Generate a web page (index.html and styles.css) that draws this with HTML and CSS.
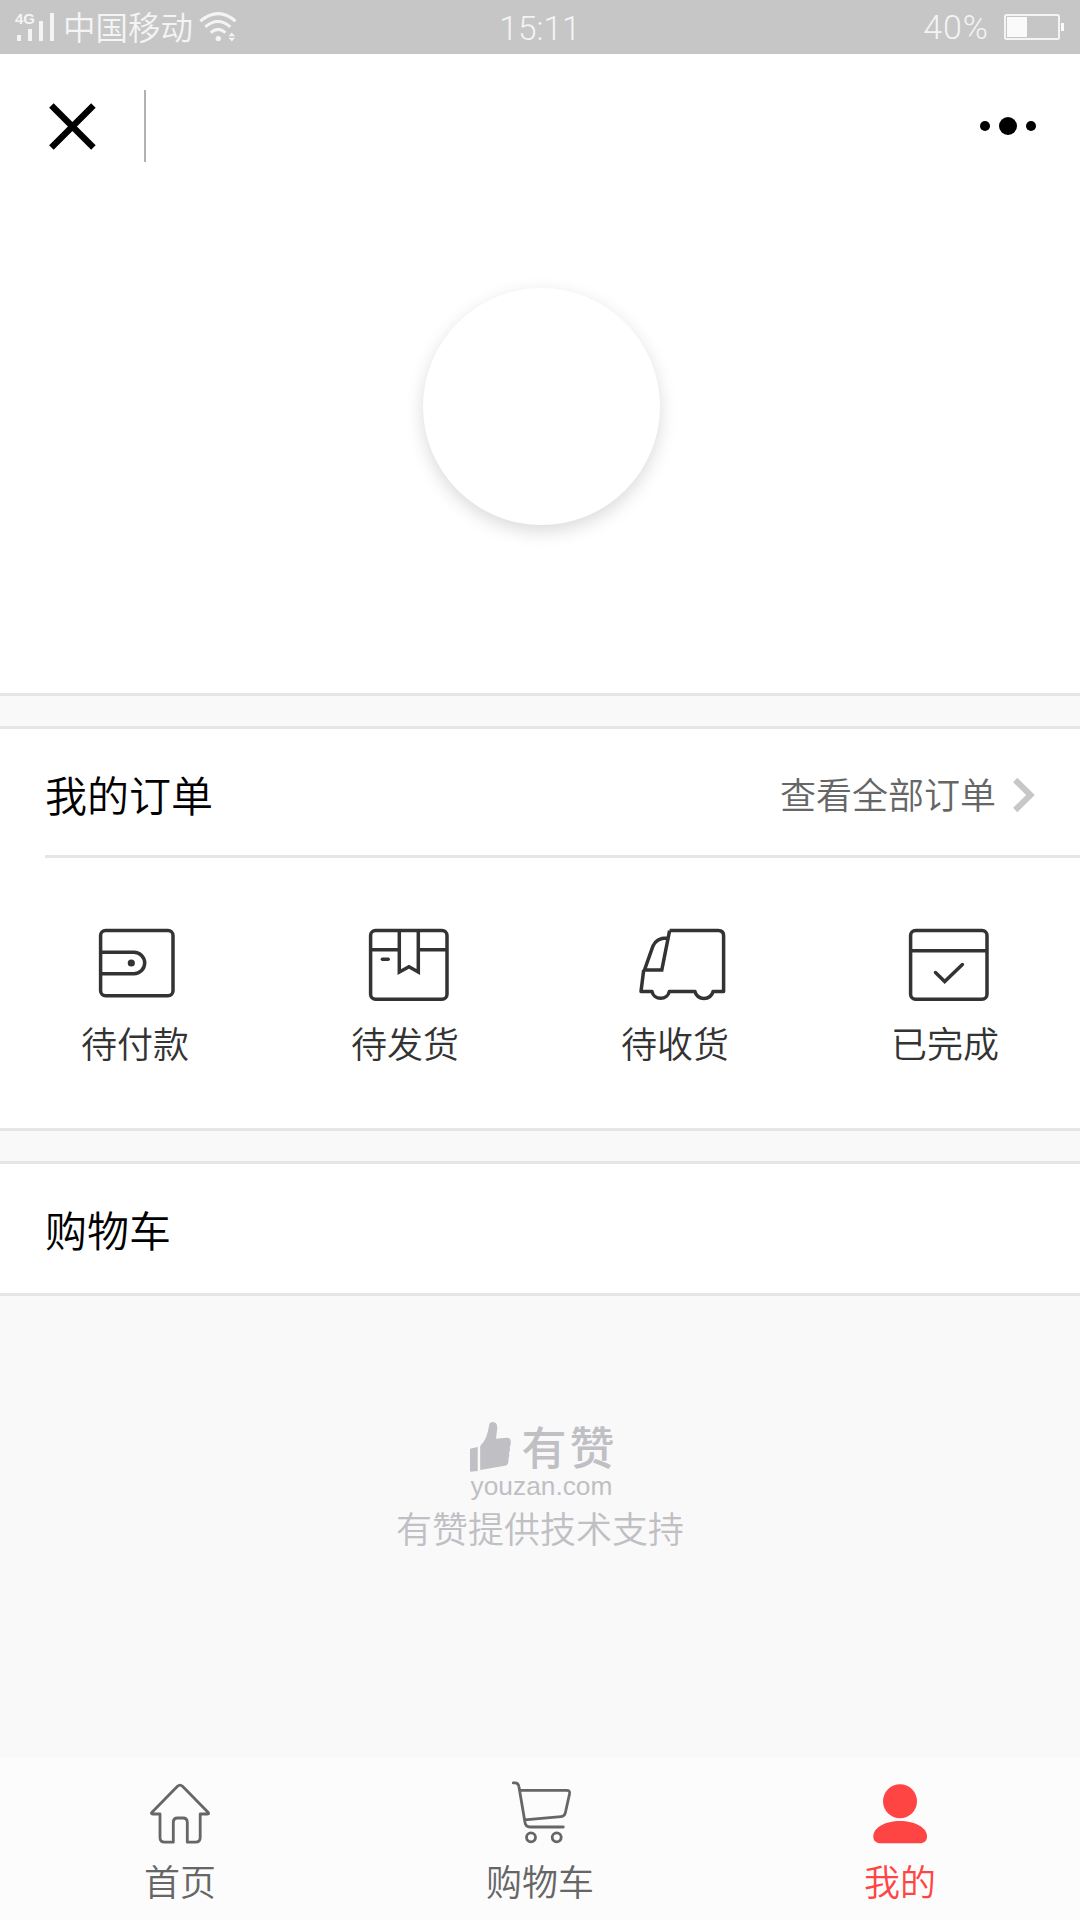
FILE: index.html
```html
<!DOCTYPE html>
<html lang="zh-CN">
<head>
<meta charset="utf-8">
<title>我的</title>
<link rel="stylesheet" href="styles.css">
</head>
<body>
<div class="app">
  <header class="status">
    <div class="status-left">
      <svg class="signal" width="44" height="54" viewBox="0 0 44 54"><text class="net" x="0" y="24">4G</text><path fill="#f4f4f4" d="M2 35h4v6h-4zM13 29h4v12h-4zM24 21h4v20h-4zM35 13h4v28h-4z"/></svg>
      <span class="carrier">中国移动</span>
      <svg class="wifi" width="40" height="54" viewBox="0 0 40 54"><g fill="none" stroke="#f4f4f4" stroke-width="3"><path d="M1.3 21.2Q19.3 6 36.5 21.2"/><path d="M6.3 26.8Q19 16.2 31.3 26.8"/><path d="M11.7 32.6Q19 26.2 26.5 32.6"/></g><circle cx="19.3" cy="38.6" r="2.7" fill="#f4f4f4"/><path fill="#f4f4f4" d="M29.5 36.2l3.3-3.7 3.3 3.7zM29.5 37.8l3.3 3.7 3.3-3.7z"/></svg>
    </div>
    <span class="clock">15:11</span>
    <div class="status-right">
      <span class="percent">40%</span>
      <svg width="61" height="54" viewBox="0 0 61 54"><rect x="1" y="15" width="54" height="24" rx="1.5" fill="none" stroke="#f4f4f4" stroke-width="2"/><path fill="#fafafa" d="M3 17h20v20H3zM57 23h3v8h-3z"/></svg>
    </div>
  </header>

  <nav class="navbar">
    <svg class="close" width="48" height="48" viewBox="0 0 48 48"><path d="M3.4 3.6l42 42M45.4 3.6l-42 42" stroke="#000" stroke-width="6.4"/></svg>
    <span class="nav-rule"></span>
    <svg class="more" width="56" height="18" viewBox="0 0 56 18"><circle cx="5" cy="9" r="5"/><circle cx="28" cy="9" r="9"/><circle cx="51" cy="9" r="5"/></svg>
  </nav>

  <section class="profile"><div class="avatar"></div></section>

  <section class="panel orders">
    <div class="panel-head">
      <h2>我的订单</h2>
      <a class="all"><span>查看全部订单</span><svg width="22" height="36" viewBox="0 0 22 36"><path d="M2.2 3L17.5 18 2.2 33" fill="none" stroke="#c7c7c7" stroke-width="6"/></svg></a>
    </div>
    <div class="order-types">
      <div class="type"><svg class="line-icon" width="108" height="86" viewBox="0 0 108 86"><rect x="19.6" y="10.6" width="72.4" height="65.2" rx="5"/><path d="M19.6 32.3H53a10.7 10.7 0 0 1 0 21.4H19.6"/><circle class="dot" cx="50.3" cy="43" r="3.6"/></svg><span>待付款</span></div>
      <div class="type"><svg class="line-icon" width="108" height="86" viewBox="0 0 108 86"><rect x="19.6" y="10.6" width="76.4" height="68.6" rx="5"/><path d="M19.6 29.7H48.3M67.3 29.7H96M48.3 10.6V52L58 46.8 67.3 52V10.6"/><path stroke-linecap="round" d="M31.4 39.3H37.2"/></svg><span>待发货</span></div>
      <div class="type"><svg class="line-icon" width="108" height="86" viewBox="0 0 108 86"><path stroke-linejoin="round" d="M48.6 10.6H97.2Q102.6 10.6 102.6 16V71.5H92A9.1 8.2 0 0 1 74 71.5H48.3A8.8 8.2 0 0 1 31 71.5H20L22.7 50"/><path d="M48.6 10.6L40.8 50H23.5L32 26Q35.5 18 45.7 18"/></svg><span>待收货</span></div>
      <div class="type"><svg class="line-icon" width="108" height="86" viewBox="0 0 108 86"><rect x="19.6" y="10.6" width="76.4" height="68.6" rx="5"/><path d="M19.6 30.7H96"/><path stroke-linecap="round" d="M44.5 52.5L53.7 61.5 71.4 44.5"/></svg><span>已完成</span></div>
    </div>
  </section>

  <section class="panel cart"><h2>购物车</h2></section>

  <footer class="support">
    <div class="brand">
      <svg width="42" height="50" viewBox="0 0 42 50"><path fill="#bfbfc4" d="M0 26.7L7.7 25V49L0 49.7zM10.2 24Q17 18 19.2 3 19.4 0 23 0 27.3 0 27.3 6L26 16.8 37 15.8Q41 16 40.7 20 41 23 39.7 25.5 40.5 28 39 31 39.8 34 38.4 36.5 39 42 36 43.5L10.2 48z"/></svg>
      <span class="brand-name">有赞</span>
    </div>
    <div class="brand-site">youzan.com</div>
    <div class="support-text">有赞提供技术支持</div>
  </footer>

  <nav class="tabs">
    <a class="tab"><svg class="tab-icon" width="72" height="72" viewBox="0 0 72 72"><path d="M33.5 10.3Q36 8 38.5 10.3L64 36.2Q65.5 38 63.5 38H56.2V61.5Q56.2 66.2 51.5 66.2H43.3V46.5Q43.3 42 39 42H33.5Q29.3 42 29.3 46.5V66.2H20.5Q16 66.2 16 61.5V38H8.7Q6.5 38 8 36.2z"/></svg><span>首页</span></a>
    <a class="tab"><svg class="tab-icon" width="72" height="72" viewBox="0 0 72 72"><path d="M9.3 6.9H11Q14.4 6.9 15 11L21 46.5Q21.7 51 26 51H59.3M15.6 14.3H62.5Q66.2 14.3 65.5 18L61.3 37Q60.5 40.3 57 40.6L20.5 43.8"/><circle cx="27" cy="61.3" r="4.5"/><circle cx="52.7" cy="61.3" r="4.5"/></svg><span>购物车</span></a>
    <a class="tab active"><svg width="72" height="72" viewBox="0 0 72 72"><circle cx="36" cy="25.3" r="17" fill="#f44"/><path fill="#f44" d="M36 45C51 45 63 51.5 63 60.5 63 65 60 67.3 56 67.3H16.5C12.3 67.3 9.3 65 9.3 60.5 9.3 51.5 21 45 36 45z"/></svg><span>我的</span></a>
  </nav>
</div>
</body>
</html>
```
FILE: styles.css
```css
* { box-sizing: border-box; }
body {
  margin: 0;
  font-family: "Noto Sans CJK SC", sans-serif;
  font-weight: 350;
  background: #f9f9f9;
}
svg { display: block; flex: none; }
h2 { margin: 0; font-size: 42px; font-weight: inherit; line-height: 60px; color: #000; }

.app { width: 1080px; height: 1920px; display: flex; flex-direction: column; }

.status {
  height: 54px;
  display: grid;
  grid-template-columns: 1fr auto 1fr;
  align-items: center;
  background: #c6c6c6;
  color: #f4f4f4;
  line-height: 54px;
}
.status-left, .status-right { display: flex; align-items: center; height: 54px; }
.status-left { padding-left: 15px; }
.status-right { justify-content: flex-end; padding-right: 15px; }
.net { font: bold 15px "Liberation Sans", sans-serif; fill: #f4f4f4; }
.carrier { font-size: 32.5px; line-height: 50px; padding-bottom: 2px; margin-left: 4px; }
.wifi { margin-left: 6px; }
.clock { font-family: Roboto, sans-serif; font-size: 33.5px; font-weight: 350; line-height: 50px; padding-top: 4px; }
.percent { font-family: Roboto, sans-serif; font-size: 34px; font-weight: 350; letter-spacing: 1px; line-height: 52px; margin-right: 15px; }

.navbar { height: 144px; display: flex; align-items: center; padding: 0 44px 0 48px; background: #fff; }
.nav-rule { width: 2px; height: 72px; margin-left: 48px; background: #b2b2b2; }
.more { margin-left: auto; }

.profile { height: 498px; padding: 90px 420px 0 423px; border-bottom: 3px solid #e5e5e5; background: #fff; }
.avatar {
  width: 237px;
  height: 237px;
  border-radius: 50%;
  background: #fff;
  box-shadow: 0 6px 18px rgba(0, 0, 0, .15);
}

.panel { border-top: 3px solid #e5e5e5; border-bottom: 3px solid #e5e5e5; background: #fff; }
.orders { height: 405px; margin-top: 30px; }
.panel-head {
  height: 129px;
  margin-left: 45px;
  padding: 5px 45px 0 0;
  display: flex;
  align-items: center;
  justify-content: space-between;
  border-bottom: 3px solid #e5e5e5;
}
.panel-head h2 { padding-bottom: 2px; }
.all { display: flex; align-items: center; gap: 17px; font-size: 36px; line-height: 54px; color: #666; }
.all span { padding-bottom: 4px; }

.order-types { display: grid; grid-template-columns: repeat(4, 1fr); padding-top: 62px; }
.type { display: flex; flex-direction: column; align-items: center; font-size: 36px; line-height: 54px; color: #333; }
.type span { margin-top: 9px; }
.line-icon { fill: none; stroke: #333; stroke-width: 3.5; }
.line-icon .dot { fill: #333; stroke: none; }

.cart { height: 135px; margin-top: 30px; padding: 35px 45px; }

.support { flex: 1; display: flex; flex-direction: column; align-items: center; padding-top: 126px; color: #bfbfc4; }
.brand { display: flex; align-items: center; gap: 9px; height: 50px; padding-left: 5px; }
.brand-name { font-size: 45px; font-weight: 500; letter-spacing: 3px; margin-right: -3px; line-height: 48px; padding-bottom: 2px; }
.brand-site { font: 26.3px/28px "Liberation Sans", sans-serif; padding-left: 3px; }
.support-text { font-size: 36px; line-height: 54px; }

.tabs { height: 162px; display: grid; grid-template-columns: repeat(3, 1fr); background: #fcfcfc; }
.tab { display: flex; flex-direction: column; align-items: center; padding-top: 18px; font-size: 36px; line-height: 54px; color: #666; }
.tab.active { color: #f44; }
.tab-icon { fill: none; stroke: #666; stroke-width: 2.8; stroke-linecap: round; stroke-linejoin: round; }
.tab span { margin-top: 5px; }
```
